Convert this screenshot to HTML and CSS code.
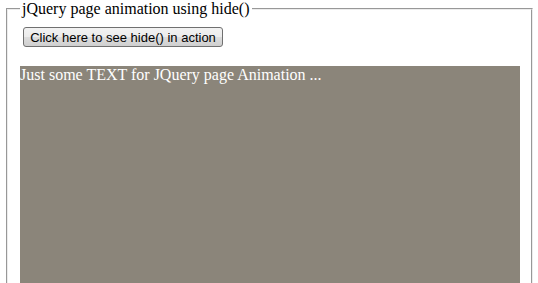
FILE: index.html
```html
<!DOCTYPE html>
<html>

<head>
    <link rel="stylesheet" href="styles.css">
    <title>jQuery page animation using hide()</title>
</head>

<body>
    <fieldset class="demo">
        <legend>jQuery page animation using hide()</legend>
        <div class="controls">
            <button class="hide-btn" type="button">Click here to see hide() in action</button>
        </div>
        <div class="animated-box">Just some TEXT for JQuery page Animation ...</div>
    </fieldset>
</body>

</html>
```

FILE: styles.css
```css
html {
    background: #FFFFFF;
}

body {
    margin: 0;
    font-family: "Liberation Serif", "Times New Roman", serif;
    font-size: 16px;
    color: #000;
}

.demo {
    margin: 0 5px 0 6px;
    padding: 0 11px 0 12px;
    border: 2px groove #ececec;
}

.demo legend {
    padding: 0 2px;
    line-height: 18px;
}

.controls {
    margin: 9px 0 0 3px;
}

.hide-btn {
    width: 200px;
    height: 20px;
    padding: 0;
    font-family: "Liberation Sans", Arial, sans-serif;
    font-size: 13px;
    color: #000;
    border: 1px solid #707070;
    border-radius: 3px;
    background: linear-gradient(#f2f2f2, #ebebeb 50%, #dddddd 50%, #cfcfcf);
}

.animated-box {
    margin-top: 19px;
    height: 300px;
    background: #8b857a;
    color: #FFFFFF;
    line-height: 18px;
}
```
